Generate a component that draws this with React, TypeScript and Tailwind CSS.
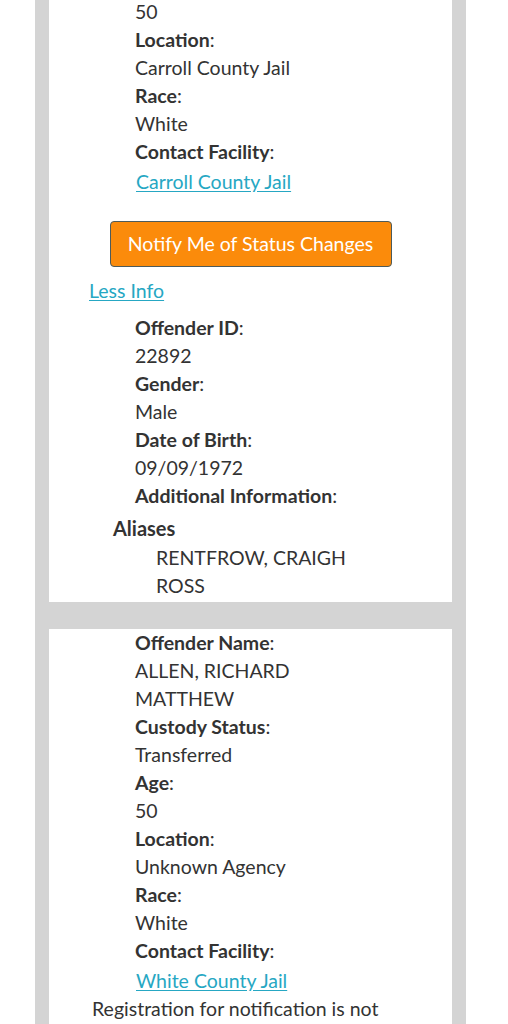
const Field = ({ label, value, link }: { label: string; value?: string[]; link?: string }) => {
  return (
    <div>
      <div className="leading-[28px]">
        <span className="font-bold">{label}</span>:
      </div>
      {value &&
        value.map((v) => (
          <div key={v} className="leading-[28px]">
            {v}
          </div>
        ))}
      {link && (
        <div className="leading-[28px] mt-[2px]">
          <a href="#" className="text-[#26a7c3] underline underline-offset-2 ml-[1px]">
            {link}
          </a>
        </div>
      )}
    </div>
  )
}

const App = () => {
  return (
    <div className="w-[508px] h-[1024px] overflow-hidden bg-white" style={{ fontFamily: "Lato, 'Open Sans', sans-serif" }}>
      <div className="ml-[35px] w-[431px] px-[14px] bg-[#d4d4d4] text-[19.5px] text-[#333333] -mt-[2px]">
        <div className="bg-white pb-[2px]">
          <div className="pl-[86px]">
            <div className="leading-[28px]">50</div>
            <Field label="Location" value={["Carroll County Jail"]} />
            <Field label="Race" value={["White"]} />
            <Field label="Contact Facility" link="Carroll County Jail" />
          </div>
          <div className="flex justify-center mt-[25px]">
            <button className="w-[282px] h-[46px] bg-[#fb8b0b] border border-[#4d5b5b] rounded-[4px] text-white text-[19.5px]">
              Notify Me of Status Changes
            </button>
          </div>
          <div className="pl-[40px] mt-[10px] leading-[28px]">
            <a href="#" className="text-[#26a7c3] underline underline-offset-2">
              Less Info
            </a>
          </div>
          <div className="pl-[86px] mt-[9px]">
            <Field label="Offender ID" value={["22892"]} />
            <Field label="Gender" value={["Male"]} />
            <Field label="Date of Birth" value={["09/09/1972"]} />
            <Field label="Additional Information" />
          </div>
          <div className="pl-[64px] mt-[3px] font-bold text-[20px] leading-[30px]">Aliases</div>
          <div className="pl-[107px] pt-[1px]">
            <div className="leading-[28px]">RENTFROW, CRAIGH</div>
            <div className="leading-[28px]">ROSS</div>
          </div>
        </div>
        <div className="h-[28px]" />
        <div className="bg-white">
          <div className="pl-[86px] -mt-[1px]">
            <Field label="Offender Name" value={["ALLEN, RICHARD", "MATTHEW"]} />
            <Field label="Custody Status" value={["Transferred"]} />
            <Field label="Age" value={["50"]} />
            <Field label="Location" value={["Unknown Agency"]} />
            <Field label="Race" value={["White"]} />
            <Field label="Contact Facility" link="White County Jail" />
          </div>
          <div className="pl-[43px] pr-[10px] leading-[28px] pb-[40px]">
            Registration for notification is not available for this offender.
          </div>
        </div>
      </div>
    </div>
  )
}

export default App
